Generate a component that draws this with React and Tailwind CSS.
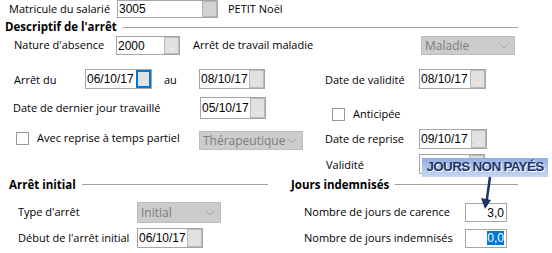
import React from "react";

const labelFont = { fontFamily: "'Open Sans', 'Noto Sans', sans-serif" };

function Dots() {
  return <span className="block text-[7px] leading-none text-white tracking-[-1px] mt-auto mb-[2px] text-center">...</span>;
}

function DateField({ value, w = "w-[66px]", focused = false, h = "h-[20px]", dots = true }) {
  return (
    <div className={`${w} ${h} shrink-0 flex border border-[#a5a5a5] bg-white`}>
      <span className="flex-1 pl-[1px] text-[12px] leading-none self-center font-['Liberation_Sans',sans-serif] text-black">
        {value}
      </span>
      {focused ? (
        <span className="w-[15px] h-full flex flex-col border-2 border-[#0078d7] bg-[#e1e1e1]">
          <Dots />
        </span>
      ) : (
        <span className="w-[15px] h-full flex flex-col border border-[#b9b9b9] bg-[#e1e1e1]">
          {dots && <Dots />}
        </span>
      )}
    </div>
  );
}

function Select({ value, w }) {
  return (
    <div className={`${w} h-full shrink-0 flex items-center border border-[#bcbcbc] bg-[#cccccc] pl-[3px] pr-[5px]`}>
      <span className="flex-1 text-[12px] text-[#7d7d7d]">{value}</span>
      <svg width="10" height="6" viewBox="0 0 10 6">
        <polyline points="0.5,0.5 5,5 9.5,0.5" fill="none" stroke="#a4a4a4" strokeWidth="1" />
      </svg>
    </div>
  );
}

function Check() {
  return <span className="w-[13px] h-[13px] shrink-0 border border-[#999999] bg-white" />;
}

function Header({ children, className = "" }) {
  return (
    <div className={`flex items-center ${className}`}>
      <span className="font-bold text-[11.5px] leading-none text-black whitespace-nowrap">{children}</span>
      <span className="flex-1 h-px bg-[#a0a0a0] ml-[6px]" />
    </div>
  );
}

export default function App() {
  return (
    <div className="relative w-[552px] h-[253px] bg-white overflow-hidden text-[11px] text-black whitespace-nowrap" style={labelFont}>
      {/* Matricule */}
      <div className="flex items-center h-[18px] pl-[9px]">
        <span className="w-[108px] shrink-0">Matricule du salarié</span>
        <div className="w-[101px] h-[18px] shrink-0 flex border border-[#a5a5a5] bg-white">
          <span className="flex-1 pl-[1px] text-[12px] self-center leading-none font-['Liberation_Sans',sans-serif]">3005</span>
          <span className="w-[15px] h-full border border-[#b5b5b5] bg-[#d3d3d3]" />
        </div>
        <span className="ml-[10px]">PETIT Noël</span>
      </div>

      {/* Descriptif de l'arrêt */}
      <Header className="h-[14px] mt-[2px] pl-[5px] pr-[34px]">Descriptif de l'arrêt</Header>

      <div className="flex items-center h-[19px] mt-[2px] pl-[14px]">
        <span className="w-[102px] shrink-0">Nature d'absence</span>
        <DateField value="2000" w="w-[64px]" h="h-[19px]" />
        <span className="ml-[13px] w-[228px] shrink-0">Arrêt de travail maladie</span>
        <Select value="Maladie" w="w-[94px]" />
      </div>

      <div className="flex items-center h-[20px] mt-[14px] pl-[14px]">
        <span className="w-[71px] shrink-0 pt-[3px]">Arrêt du</span>
        <DateField value="06/10/17" w="w-[67px]" focused />
        <span className="ml-[12px] w-[35px] shrink-0 pt-[3px]">au</span>
        <DateField value="08/10/17" />
        <span className="ml-[60px] w-[94px] shrink-0 pt-[3px]">Date de validité</span>
        <DateField value="08/10/17" w="w-[67px]" />
      </div>

      <div className="flex items-start h-[22px] mt-[8px] pl-[13px]">
        <span className="w-[187px] shrink-0 self-center">Date de dernier jour travaillé</span>
        <DateField value="05/10/17" h="h-[22px]" />
        <div className="ml-[66px] mt-[9px] flex items-center">
          <Check />
          <span className="ml-[8px]">Anticipée</span>
        </div>
      </div>

      <div className="flex items-center h-[21px] mt-[9px] pl-[16px]">
        <Check />
        <span className="ml-[8px] w-[162px] shrink-0">Avec reprise à temps partiel</span>
        <div className="h-[19px] mt-[4px]">
          <Select value="Thérapeutique" w="w-[104px]" />
        </div>
        <span className="ml-[22px] w-[94px] shrink-0 pt-[2px]">Date de reprise</span>
        <DateField value="09/10/17" w="w-[68px]" />
      </div>

      <div className="flex items-center h-[20px] mt-[5px] pl-[326px]">
        <span className="w-[93px] shrink-0 pt-[2px]">Validité</span>
        <DateField value="" dots={false} />
      </div>

      <div className="flex items-center h-[15px] mt-[3px]">
        <Header className="w-[268px] pl-[9px]">Arrêt initial</Header>
        <Header className="w-[227px] ml-[23px]">Jours indemnisés</Header>
      </div>

      <div className="flex items-center h-[21px] mt-[10px] pl-[18px]">
        <span className="w-[119px] shrink-0">Type d'arrêt</span>
        <Select value="Initial" w="w-[84px]" />
        <span className="ml-[83px] w-[161px] shrink-0">Nombre de jours de carence</span>
        <div className="w-[42px] h-[19px] shrink-0 flex items-center justify-end pr-[2px] border border-[#a5a5a5] bg-white text-[12px] font-['Liberation_Sans',sans-serif]">
          3,0
        </div>
      </div>

      <div className="flex items-center h-[20px] mt-[5px] pl-[18px]">
        <span className="w-[119px] shrink-0">Début de l'arrêt initial</span>
        <DateField value="06/10/17" />
        <span className="ml-[101px] w-[161px] shrink-0">Nombre de jours indemnisés</span>
        <div className="w-[42px] h-[19px] shrink-0 flex items-center justify-end pr-[2px] border border-[#a5a5a5] bg-white text-[12px] font-['Liberation_Sans',sans-serif]">
          <span className="bg-[#0078d7] text-white leading-[14px]">0,0</span>
        </div>
      </div>

      {/* Callout */}
      <div className="absolute left-[422px] top-[158px] w-[126px] h-[19px] flex items-center justify-center bg-gradient-to-b from-[#93afe0] to-[#c6d6f1]">
        <span className="font-['Liberation_Sans',sans-serif] font-bold text-[13.5px] tracking-[-0.7px] text-[#1e3566] [text-shadow:1px_1px_0_#ffffff]">
          JOURS NON PAYÉS
        </span>
      </div>
      <svg className="absolute left-[478px] top-[176px]" width="20" height="34" viewBox="0 0 20 34">
        <line x1="12" y1="1" x2="8.5" y2="26" stroke="#1d3462" strokeWidth="2.5" />
        <polygon points="3,22 13,24 7,33" fill="#1d3462" />
      </svg>
    </div>
  );
}
